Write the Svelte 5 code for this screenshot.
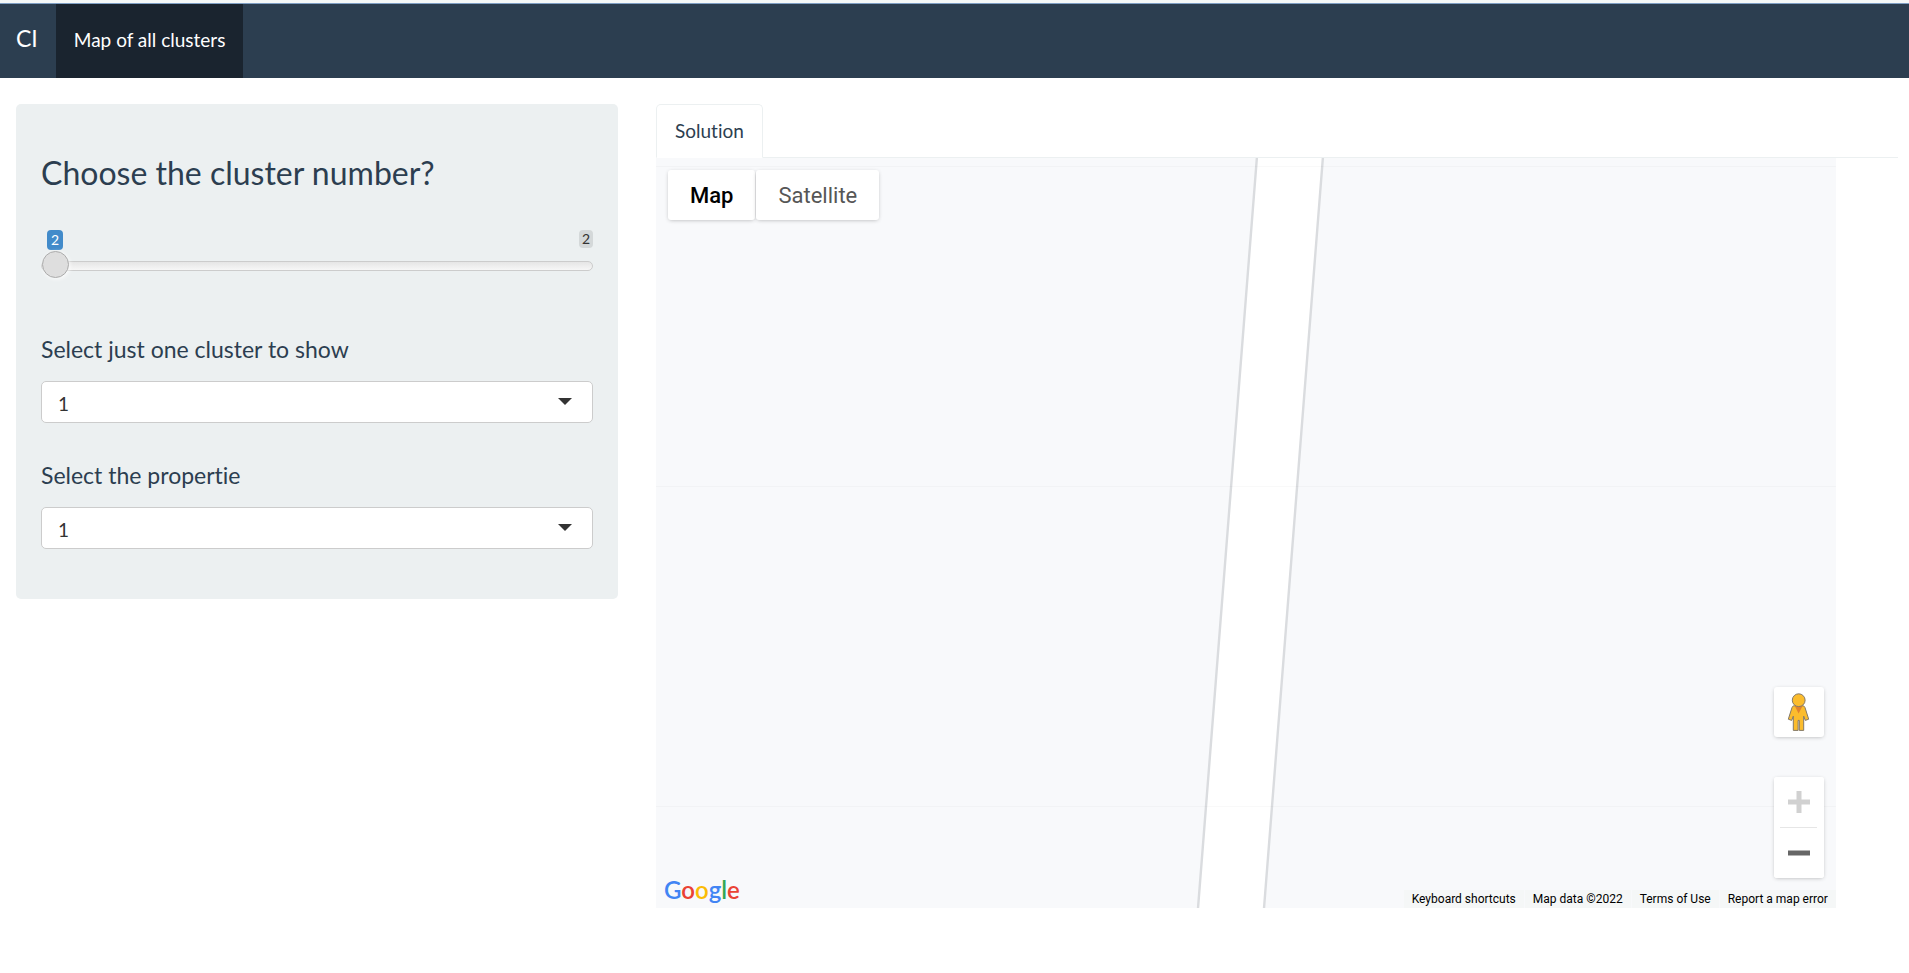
<script lang="ts">
    let clusters = $state(2);
    let cluster = $state("1");
    let property = $state("1");
    let mapType = $state("Map");

    const logo = [
        ["G", "blue"],
        ["o", "red"],
        ["o", "yellow"],
        ["g", "blue"],
        ["l", "green"],
        ["e", "red"],
    ];
</script>

<nav class="navbar">
    <a class="brand" href="#home">CI</a>
    <a class="nav-item active" href="#map">Map of all clusters</a>
</nav>

<main class="container">
    <form class="well">
        <label class="title" for="clusters">Choose the cluster number?</label>
        <div class="slider">
            <div class="slider-values">
                <output class="value" for="clusters">{clusters}</output>
                <span class="max">2</span>
            </div>
            <input id="clusters" type="range" min="2" max="2" bind:value={clusters} />
        </div>

        <label class="field-label" for="cluster">Select just one cluster to show</label>
        <div class="select">
            <select id="cluster" bind:value={cluster}>
                <option>1</option>
            </select>
            <span class="caret"></span>
        </div>

        <label class="field-label" for="property">Select the propertie</label>
        <div class="select">
            <select id="property" bind:value={property}>
                <option>1</option>
            </select>
            <span class="caret"></span>
        </div>
    </form>

    <section class="content">
        <div class="tabs" role="tablist">
            <a class="tab" href="#solution" role="tab" aria-selected="true">Solution</a>
        </div>

        <div class="map">
            <svg class="tiles" viewBox="0 0 1180 750" preserveAspectRatio="xMidYMid slice" aria-hidden="true">
                <rect width="1180" height="750" fill="#f8f9fb" />
                <path d="M601 -1L542 751H608L667 -1Z" fill="#fff" />
                <path d="M601 -1L542 751M667 -1L608 751" fill="none" stroke="#dadcdf" stroke-width="2.4" />
                <path d="M0 8.5H1180M0 328.5H1180M0 648.5H1180" fill="none" stroke="#000" stroke-opacity=".025" />
            </svg>

            <div class="map-types">
                {#each ["Map", "Satellite"] as type}
                    <button class:selected={mapType === type} onclick={() => (mapType = type)}>{type}</button>
                {/each}
            </div>

            <div class="controls">
                <button class="pegman" aria-label="Street View">
                    <svg width="24" height="38" viewBox="0 0 24 38">
                        <path
                            d="M7.500 12.800h7.800c1.600 0 2.300.6 2.700 1.800l3.700 11.600-3.400 1.200-1.600-4.200v14.200h-4.400v-10h-1.200v10H6.300V23.200l-1.600 4.200-3.400-1.200L5 14.600c.4-1.200 1-1.800 2.500-1.800z"
                            fill="#fbbc2d"
                            stroke="#83796a"
                        />
                        <path d="M7.800 13h7.800l-4 7.500z" fill="#e1822e" />
                        <circle cx="11.700" cy="7.200" r="6.400" fill="#fbbc2d" stroke="#83796a" />
                    </svg>
                </button>
                <div class="zoom">
                    <button aria-label="Zoom in" disabled>
                        <svg width="22" height="22" viewBox="0 0 22 22">
                            <path d="M8.500 0h5v8.500H22v5h-8.500V22h-5v-8.500H0v-5h8.500z" fill="#d1d1d1" />
                        </svg>
                    </button>
                    <button aria-label="Zoom out">
                        <svg width="22" height="22" viewBox="0 0 22 22">
                            <path d="M0 8.500h22v5H0z" fill="#666" />
                        </svg>
                    </button>
                </div>
            </div>

            <a class="logo" href="#google" aria-label="Google">
                {#each logo as [letter, color]}<span class={color}>{letter}</span>{/each}
            </a>

            <div class="legal">
                <button>Keyboard shortcuts</button>
                <span>Map data ©2022</span>
                <a href="#terms">Terms of Use</a>
                <a href="#report">Report a map error</a>
            </div>
        </div>
    </section>
</main>

<style>
    :global(body) {
        background: #fff;
        color: #2c3e50;
        font-family: Lato, "Open Sans", sans-serif;
        font-size: 19px;
        font-variant-ligatures: none;
        line-height: 27px;
    }

    a {
        color: inherit;
        text-decoration: none;
    }

    button {
        border: 0;
        background: #fff;
        font-family: Roboto, sans-serif;
        cursor: pointer;
    }

    .navbar {
        display: flex;
        height: 74px;
        margin-top: 3px;
        border-top: 1px solid #7f9fc4;
        background: #2c3e50;
        box-shadow: 0 -3px #f5f8f8;
        color: #fff;
    }

    .brand {
        padding: 21px 18px 0 16px;
        font-size: 23px;
    }

    .nav-item {
        padding: 22px 18px 0;
    }

    .nav-item.active {
        background: #1a242f;
    }

    .container {
        display: grid;
        grid-template-columns: repeat(12, 1fr);
        align-items: start;
        column-gap: 38px;
        padding: 26px 11px 0 16px;
    }

    .well {
        grid-column: span 4;
        box-sizing: border-box;
        padding: 50px 25px;
        border-radius: 5px;
        background: #ecf0f1;
    }

    .title {
        display: block;
        font-size: 32px;
        line-height: 38px;
    }

    .slider {
        margin: 38px 0 52px;
    }

    .slider-values {
        display: flex;
        justify-content: space-between;
        align-items: flex-start;
        padding-left: 6px;
        font-size: 14px;
        line-height: 18px;
    }

    .value,
    .max {
        padding: 1px 4px;
        border-radius: 4px;
    }

    .value {
        background: #428bca;
        color: #fff;
    }

    .max {
        padding: 0 3px;
        background: #d4d8d9;
        color: #333;
    }

    input[type="range"] {
        appearance: none;
        display: block;
        width: 100%;
        height: 28px;
        margin: 2px 0 0;
        background: none;
    }

    input[type="range"]::-webkit-slider-runnable-track {
        box-sizing: border-box;
        height: 10px;
        border: 1px solid #ccc;
        border-radius: 10px;
        background: linear-gradient(#ddd -50%, #fff 150%);
    }

    input[type="range"]::-webkit-slider-thumb {
        appearance: none;
        box-sizing: border-box;
        width: 27px;
        height: 27px;
        margin-top: -11px;
        border: 1px solid #ababab;
        border-radius: 50%;
        background: #dedede;
        box-shadow: 1px 1px 4px rgba(255, 255, 255, 0.8);
    }

    .field-label {
        display: block;
        margin-bottom: 15px;
        font-size: 23px;
        line-height: 34px;
    }

    .select {
        position: relative;
        margin-bottom: 35px;
    }

    .select:last-child {
        margin-bottom: 0;
    }

    select {
        appearance: none;
        display: block;
        width: 100%;
        height: 42px;
        padding: 2px 16px 0;
        border: 1px solid #ccc;
        border-radius: 5px;
        background: #fff;
        color: #333;
        font-family: inherit;
        font-size: 19px;
    }

    .caret {
        position: absolute;
        top: 17px;
        right: 21px;
        border: 7px solid transparent;
        border-top-color: #333;
        border-bottom: 0;
        pointer-events: none;
    }

    .content {
        grid-column: span 8;
    }

    .tabs {
        display: flex;
        border-bottom: 1px solid #ecf0f1;
    }

    .tab {
        margin-bottom: -1px;
        padding: 12px 18px 13px;
        border: 1px solid #ecf0f1;
        border-bottom-color: #fff;
        border-radius: 5px 5px 0 0;
        background: #fff;
    }

    .map {
        position: relative;
        width: 95%;
        height: 750px;
        overflow: hidden;
    }

    .tiles {
        display: block;
        width: 100%;
        height: 100%;
    }

    .map-types {
        position: absolute;
        top: 12px;
        left: 12px;
        display: flex;
        gap: 1px;
    }

    .map-types button {
        height: 50px;
        padding: 0 22px;
        border-radius: 3px;
        box-shadow: 0 1px 4px -1px rgba(0, 0, 0, 0.3);
        color: #565656;
        font-size: 22px;
    }

    .map-types .selected {
        color: #000;
        font-weight: 500;
    }

    .controls {
        position: absolute;
        right: 12px;
        bottom: 30px;
        display: flex;
        flex-direction: column;
        gap: 40px;
    }

    .controls button {
        display: flex;
        align-items: center;
        justify-content: center;
        width: 50px;
        height: 50px;
        padding: 0;
        border-radius: 3px;
    }

    .pegman,
    .zoom {
        border-radius: 3px;
        box-shadow: 0 1px 4px -1px rgba(0, 0, 0, 0.3);
    }

    .zoom {
        position: relative;
        display: flex;
        flex-direction: column;
        gap: 1px;
        background: #fff;
    }

    .zoom::after {
        content: "";
        position: absolute;
        top: 50px;
        left: 6px;
        right: 7px;
        height: 1px;
        background: #e6e6e6;
    }

    .logo {
        position: absolute;
        left: 8px;
        bottom: 3px;
        font-size: 24px;
        line-height: 30px;
        font-weight: 600;
    }

    .blue {
        color: #4285f4;
    }

    .red {
        color: #ea4335;
    }

    .yellow {
        color: #fbbc05;
    }

    .green {
        color: #34a853;
    }

    .legal {
        position: absolute;
        right: 0;
        bottom: 0;
        display: flex;
        gap: 1px;
    }

    .legal > * {
        padding: 0 8px;
        background: #f5f7f7;
        color: #000;
        font-family: Roboto, sans-serif;
        font-size: 12px;
        line-height: 18px;
    }
</style>
